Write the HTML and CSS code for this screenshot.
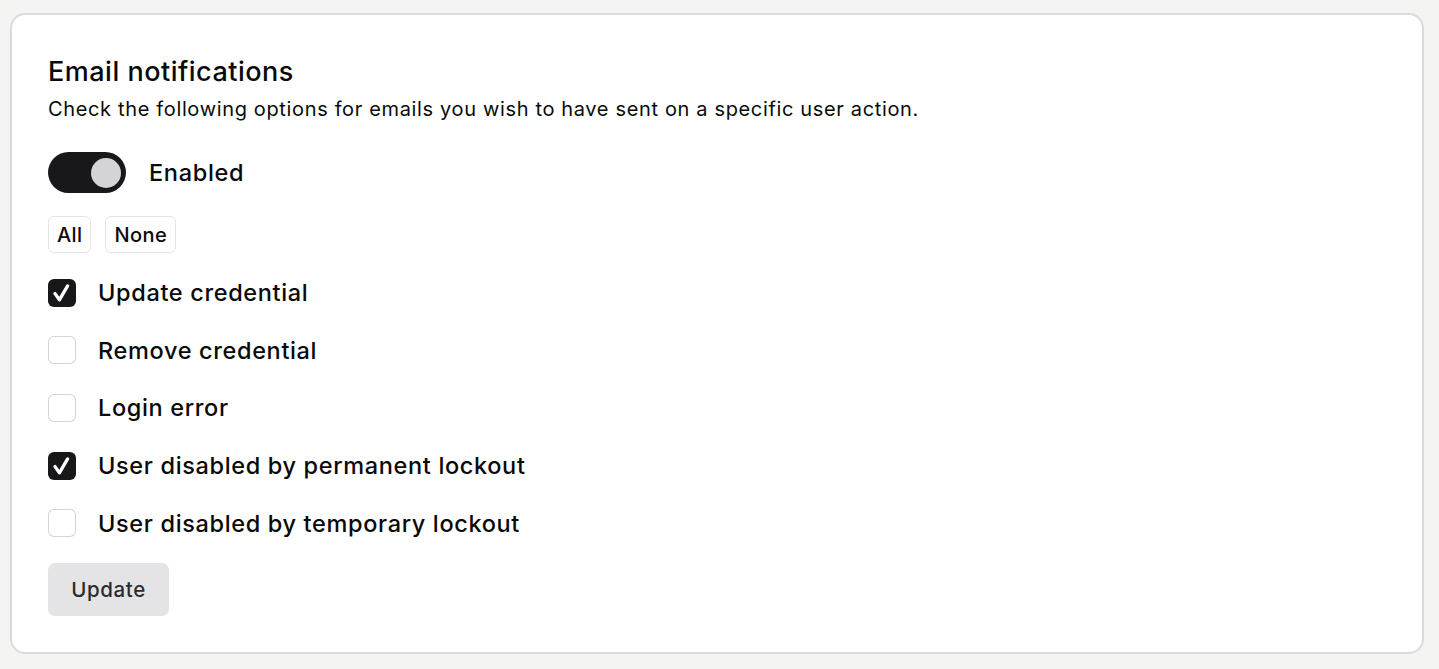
FILE: index.html
```html
<!DOCTYPE html>
<html lang="en">
<head>
<meta charset="utf-8">
<title>Email notifications</title>
<link rel="stylesheet" href="styles.css">
</head>
<body>
<main class="page">
  <section class="card">
    <h1 class="title">Email notifications</h1>
    <p class="subtitle">Check the following options for emails you wish to have sent on a specific user action.</p>

    <label class="switch-row">
      <span class="switch switch-on"><span class="knob"></span></span>
      <span class="switch-label">Enabled</span>
    </label>

    <div class="quick">
      <button class="chip" type="button">All</button>
      <button class="chip" type="button">None</button>
    </div>

    <ul class="options">
      <li class="option">
        <span class="box box-checked"><svg class="check" viewBox="0 0 28 28" width="28" height="28"><path d="M7 14.6L11.4 20.8L19.6 6.9" fill="none" stroke="#fff" stroke-width="3.3" stroke-linecap="round" stroke-linejoin="round"/></svg></span>
        <span class="option-label">Update credential</span>
      </li>
      <li class="option">
        <span class="box"></span>
        <span class="option-label">Remove credential</span>
      </li>
      <li class="option">
        <span class="box"></span>
        <span class="option-label">Login error</span>
      </li>
      <li class="option">
        <span class="box box-checked"><svg class="check" viewBox="0 0 28 28" width="28" height="28"><path d="M7 14.6L11.4 20.8L19.6 6.9" fill="none" stroke="#fff" stroke-width="3.3" stroke-linecap="round" stroke-linejoin="round"/></svg></span>
        <span class="option-label">User disabled by permanent lockout</span>
      </li>
      <li class="option">
        <span class="box"></span>
        <span class="option-label">User disabled by temporary lockout</span>
      </li>
    </ul>

    <button class="update" type="button">Update</button>
  </section>
</main>
</body>
</html>
```

FILE: styles.css
```css
* { box-sizing: border-box; }

html, body {
  margin: 0;
  background: #f4f4f3;
}

body {
  font-family: Inter, "Noto Sans", sans-serif;
  color: #0a0a0a;
}

.page {
  padding: 13px 15px 16px 10px;
}

.card {
  background: #fff;
  border: 2px solid #d9dade;
  border-radius: 15px;
  padding: 40px 36px 36px 36px;
  min-height: 640px;
}

.title {
  margin: 0;
  font-size: 27px;
  line-height: 34px;
  font-weight: 500;
  letter-spacing: 0.5px;
}

.subtitle {
  margin: 7px 0 0 0;
  font-size: 20px;
  line-height: 26px;
  font-weight: 400;
  letter-spacing: 0.65px;
}

.switch-row {
  display: flex;
  align-items: center;
  gap: 23px;
  margin-top: 30px;
}

.switch {
  display: flex;
  align-items: center;
  justify-content: flex-end;
  width: 78px;
  height: 41px;
  border-radius: 21px;
  background: #18181b;
  padding: 0 5px;
}

.knob {
  width: 30px;
  height: 30px;
  border-radius: 50%;
  background: #d4d4d8;
}

.switch-label {
  font-size: 23.5px;
  font-weight: 500;
  letter-spacing: 0.7px;
}

.quick {
  display: flex;
  gap: 14px;
  margin-top: 23px;
}

.chip {
  font-family: inherit;
  font-size: 20px;
  font-weight: 500;
  letter-spacing: 0.4px;
  color: #0a0a0a;
  background: #fff;
  border: 1px solid #e4e4e7;
  border-radius: 6px;
  height: 37px;
  padding: 0 8px;
}

.options {
  list-style: none;
  margin: 11px 0 0 0;
  padding: 0;
}

.option {
  display: flex;
  align-items: center;
  gap: 22px;
  height: 57.6px;
}

.box {
  width: 28px;
  height: 28px;
  box-shadow: inset 0 0 0 1px #d4d4d8;
  border-radius: 6px;
  flex: none;
}

.box-checked {
  background: #18181b;
  box-shadow: none;
}

.check {
  display: block;
}

.option-label {
  font-size: 23.5px;
  font-weight: 500;
  letter-spacing: 0.65px;
}

.update {
  margin-top: 11px;
  font-family: inherit;
  font-size: 20.5px;
  font-weight: 500;
  letter-spacing: 0.6px;
  color: #2b2b30;
  background: #e4e4e7;
  border: none;
  border-radius: 7px;
  width: 121px;
  height: 53px;
}
```
